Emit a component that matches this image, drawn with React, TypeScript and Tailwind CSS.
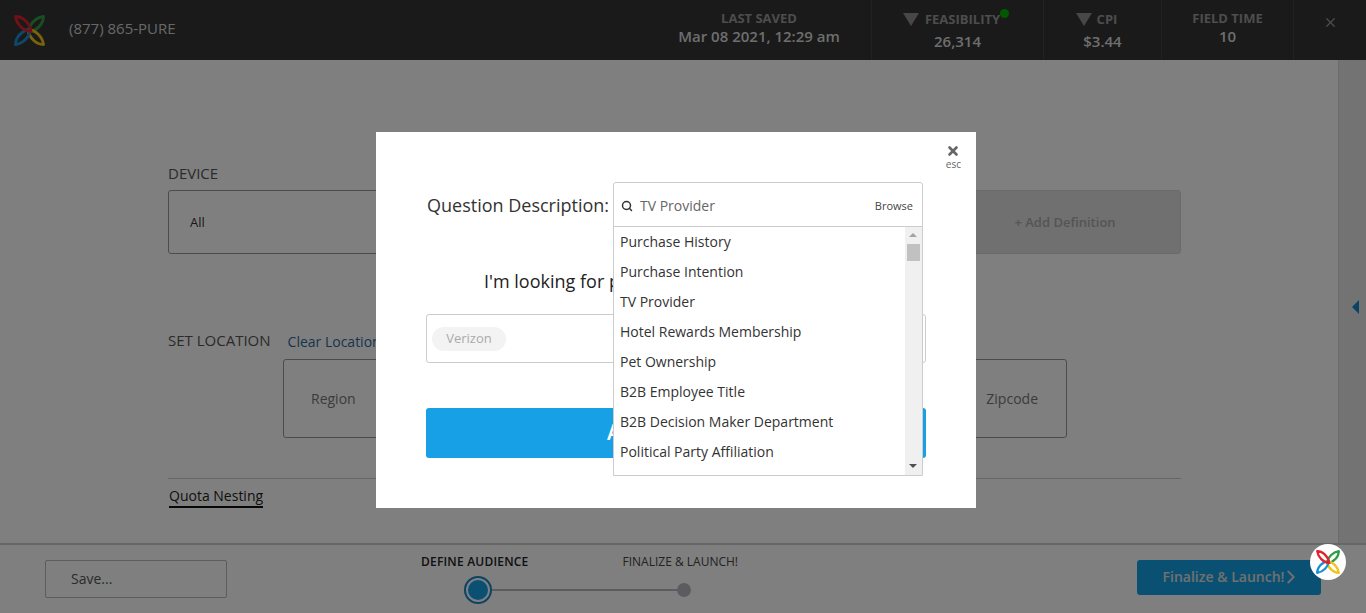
import { ChevronRight, Search, X } from "lucide-react";

const options = [
  "Purchase History",
  "Purchase Intention",
  "TV Provider",
  "Hotel Rewards Membership",
  "Pet Ownership",
  "B2B Employee Title",
  "B2B Decision Maker Department",
  "Political Party Affiliation",
];

function Logo({ size }: { size: number }) {
  const leaf = "M-13.5 -13.5 C-7 -13.5 0 -8 1.5 1 C-6 0.5 -12.5 -6 -13.5 -13.5 Z";
  return (
    <svg width={size} height={size} viewBox="-15 -15 30 30">
      {[
        { r: 90, c: "#2e9e45" },
        { r: 180, c: "#f0c419" },
        { r: 270, c: "#1b8fd2" },
        { r: 0, c: "#e2202e" },
      ].map((l) => (
        <path key={l.r} d={leaf} transform={`rotate(${l.r})`} fill="none" stroke={l.c} strokeWidth={2.8} strokeLinejoin="round" />
      ))}
    </svg>
  );
}

function Triangle() {
  return <span className="inline-block h-0 w-0 border-x-[8px] border-t-[13px] border-x-transparent border-t-[#8f8f8f]" />;
}

export default function App() {
  return (
    <div className="relative flex h-[613px] w-full flex-col overflow-hidden bg-white font-['Open_Sans',sans-serif] text-[#333]">
      <header className="flex h-[60px] shrink-0 items-center bg-[#343434] text-[#bdbdbd]">
        <div className="ml-[14px] mr-[24px] flex h-[31px] w-[31px] items-center justify-center">
          <Logo size={31} />
        </div>
        <span className="mb-[4px] text-[15px] text-[#d0d0d0]">(877) 865-PURE</span>
        <div className="ml-auto flex h-full">
          <div className="flex w-[224px] flex-col items-center pt-[12px] leading-none">
            <span className="text-[13px] font-bold text-[#9a9a9a]">LAST SAVED</span>
            <span className="mt-[4px] text-[15px] font-semibold text-[#dcdcdc]">Mar 08 2021, 12:29 am</span>
          </div>
          <div className="flex w-[173px] flex-col items-center border-x border-[#444] pt-[13px] leading-none">
            <span className="relative -ml-[12px] flex items-center gap-[6px] text-[13px] font-bold text-[#9a9a9a]">
              <Triangle />
              FEASIBILITY
              <span className="absolute -right-[9px] -top-[4px] h-[9px] w-[9px] rounded-full bg-[#00b000]" />
            </span>
            <span className="mt-[8px] text-[15px] font-semibold text-[#dcdcdc]">26,314</span>
          </div>
          <div className="flex w-[118px] flex-col items-center border-r border-[#444] pt-[13px] leading-none">
            <span className="-ml-[12px] flex items-center gap-[5px] text-[13px] font-bold text-[#9a9a9a]">
              <Triangle />
              CPI
            </span>
            <span className="mt-[8px] text-[15px] font-semibold text-[#dcdcdc]">$3.44</span>
          </div>
          <div className="flex w-[132px] flex-col items-center border-r border-[#444] pt-[12px] leading-none">
            <span className="text-[13px] font-bold text-[#9a9a9a]">FIELD TIME</span>
            <span className="mt-[4px] text-[15px] font-semibold text-[#dcdcdc]">10</span>
          </div>
          <div className="flex w-[72px] justify-center pt-[15px]">
            <X size={15} strokeWidth={2} className="text-[#9a9a9a]" />
          </div>
        </div>
      </header>

      <div className="flex min-h-0 flex-1">
        <main className="min-w-0 flex-1 pl-[168px] pr-[157px] pt-[103px]">
          <div className="text-[15px] leading-[20px] text-[#555]">DEVICE</div>
          <div className="mt-[7px] flex h-[64px] items-stretch">
            <span className="flex flex-1 items-center rounded-l-[3px] border border-[#999] pl-[21px] pt-px text-[13px] text-[#333]">All</span>
            <span className="flex w-[232px] items-center justify-center rounded-r-[3px] border border-[#d5d5d5] bg-[#e0e0e0] pt-px text-[13px] font-semibold text-[#aaa]">
              + Add Definition
            </span>
          </div>

          <div className="mt-[76px] flex items-start gap-[17px]">
            <span className="text-[15px] leading-[20px] text-[#555]">SET LOCATION</span>
            <span className="mt-[2px] text-sm leading-[20px] text-[#2b6a99]">Clear Locations</span>
          </div>
          <div className="ml-[115px] mr-[114px] mt-[7px] flex h-[79px] items-center justify-between rounded-[3px] border border-[#999] pl-[27px] pr-[28px] text-sm text-[#777]">
            <span>Region</span>
            <span>Zipcode</span>
          </div>

          <div className="mt-[40px] border-t border-[#ccc] pt-[4px]">
            <span className="ml-px inline-block border-b-2 border-[#111] text-sm leading-[21px] text-[#222]">
              Quota Nesting
            </span>
          </div>
        </main>
        <aside className="flex w-[28px] shrink-0 items-center justify-end border-l border-[#d8d8d8] bg-[#e6e6e6] pr-[7px] pt-[10px]">
          <span className="h-0 w-0 border-y-[7px] border-r-[7px] border-y-transparent border-r-[#1389c9]" />
        </aside>
      </div>

      <footer className="relative flex h-[70px] shrink-0 items-start border-t-2 border-[#ccc] bg-white">
        <div className="ml-[45px] mt-[15px] flex h-[38px] w-[182px] items-center rounded-[2px] border border-[#bbb] pl-[25px] text-sm text-[#555]">
          Save...
        </div>
        <div className="ml-[194px] mt-[8px] w-[317px]">
          <div className="flex justify-between text-xs leading-[17px]">
            <span className="font-semibold tracking-[0.2px] text-[#222]">DEFINE AUDIENCE</span>
            <span className="text-[#444]">FINALIZE &amp; LAUNCH!</span>
          </div>
          <div className="ml-[43px] mt-[6px] flex w-[227px] items-center">
            <span className="flex h-[28px] w-[28px] items-center justify-center rounded-full border-2 border-[#1389c9] bg-white">
              <span className="h-[20px] w-[20px] rounded-full bg-[#14a0e5]" />
            </span>
            <span className="h-[2px] flex-1 bg-[#b9b9c0]" />
            <span className="h-[14px] w-[14px] rounded-full bg-[#b9b9c0]" />
          </div>
        </div>
        <button className="ml-[399px] mt-[15px] flex h-[35px] w-[184px] items-center justify-center rounded-[3px] bg-[#14a0e5] pb-[2px] pl-[7px] text-sm font-semibold text-[#e0e0e0]">
          Finalize &amp; Launch!
          <ChevronRight size={22} strokeWidth={2} className="-ml-[4px]" />
        </button>
      </footer>

      {/* dim layer and modal */}
      <div className="absolute inset-0 bg-black/50" />

      <div className="absolute left-[376px] top-[132px] h-[376px] w-[600px] bg-white px-[50px] pt-[61px]">
        <div className="pl-px text-lg leading-[25px] text-[#333]">Question Description:</div>
        <div className="mt-[51px] pl-[58px] text-lg leading-[25px] text-[#222]">I'm looking for people</div>
        <div className="mt-[20px] flex h-[49px] items-center rounded-[3px] border border-[#ccc] pl-[5px]">
          <span className="flex h-[24px] w-[74px] items-center justify-center rounded-full bg-[#f3f3f3] text-[13px] text-[#aaa]">
            Verizon
          </span>
        </div>
        <button className="mt-[45px] flex h-[50px] w-full items-center justify-center rounded-[3px] bg-[#17a0e5] text-[21px] font-semibold text-white">
          Add Question
        </button>

        <button className="absolute right-[15px] top-[12px] flex flex-col items-center leading-none">
          <X size={14} strokeWidth={4.5} className="text-[#666]" />
          <span className="mt-px text-[10px] text-[#666]">esc</span>
        </button>

        <div className="absolute left-[237px] top-[50px] w-[310px] rounded-t-[3px] border border-[#ccc] bg-white">
          <div className="flex h-[44px] items-center border-b border-[#ccc] pl-[7px] pr-[9px] pt-[3px]">
            <Search size={12} strokeWidth={3} className="text-[#333]" />
            <span className="ml-[7px] text-sm text-[#666]">TV Provider</span>
            <span className="ml-auto text-[11px] text-[#444]">Browse</span>
          </div>
          <div className="flex h-[248px]">
            <ul className="min-w-0 flex-1 overflow-hidden pl-[6px] text-sm text-[#333]">
              {options.map((o) => (
                <li key={o} className="flex h-[30px] items-center">
                  {o}
                </li>
              ))}
            </ul>
            <div className="relative w-[17px] shrink-0 bg-[#f0f0f0]">
              <span className="absolute left-[4px] top-[6px] h-0 w-0 border-x-[4px] border-b-[4px] border-x-transparent border-b-[#a3a3a3]" />
              <span className="absolute left-[2px] top-[17px] h-[17px] w-[13px] bg-[#c1c1c1]" />
              <span className="absolute bottom-[7px] left-[4px] h-0 w-0 border-x-[4px] border-t-[4px] border-x-transparent border-t-[#505050]" />
            </div>
          </div>
        </div>
      </div>

      <div className="absolute left-[1310px] top-[544px] flex h-[36px] w-[36px] items-center justify-center rounded-full bg-white">
        <Logo size={24} />
      </div>
    </div>
  );
}
